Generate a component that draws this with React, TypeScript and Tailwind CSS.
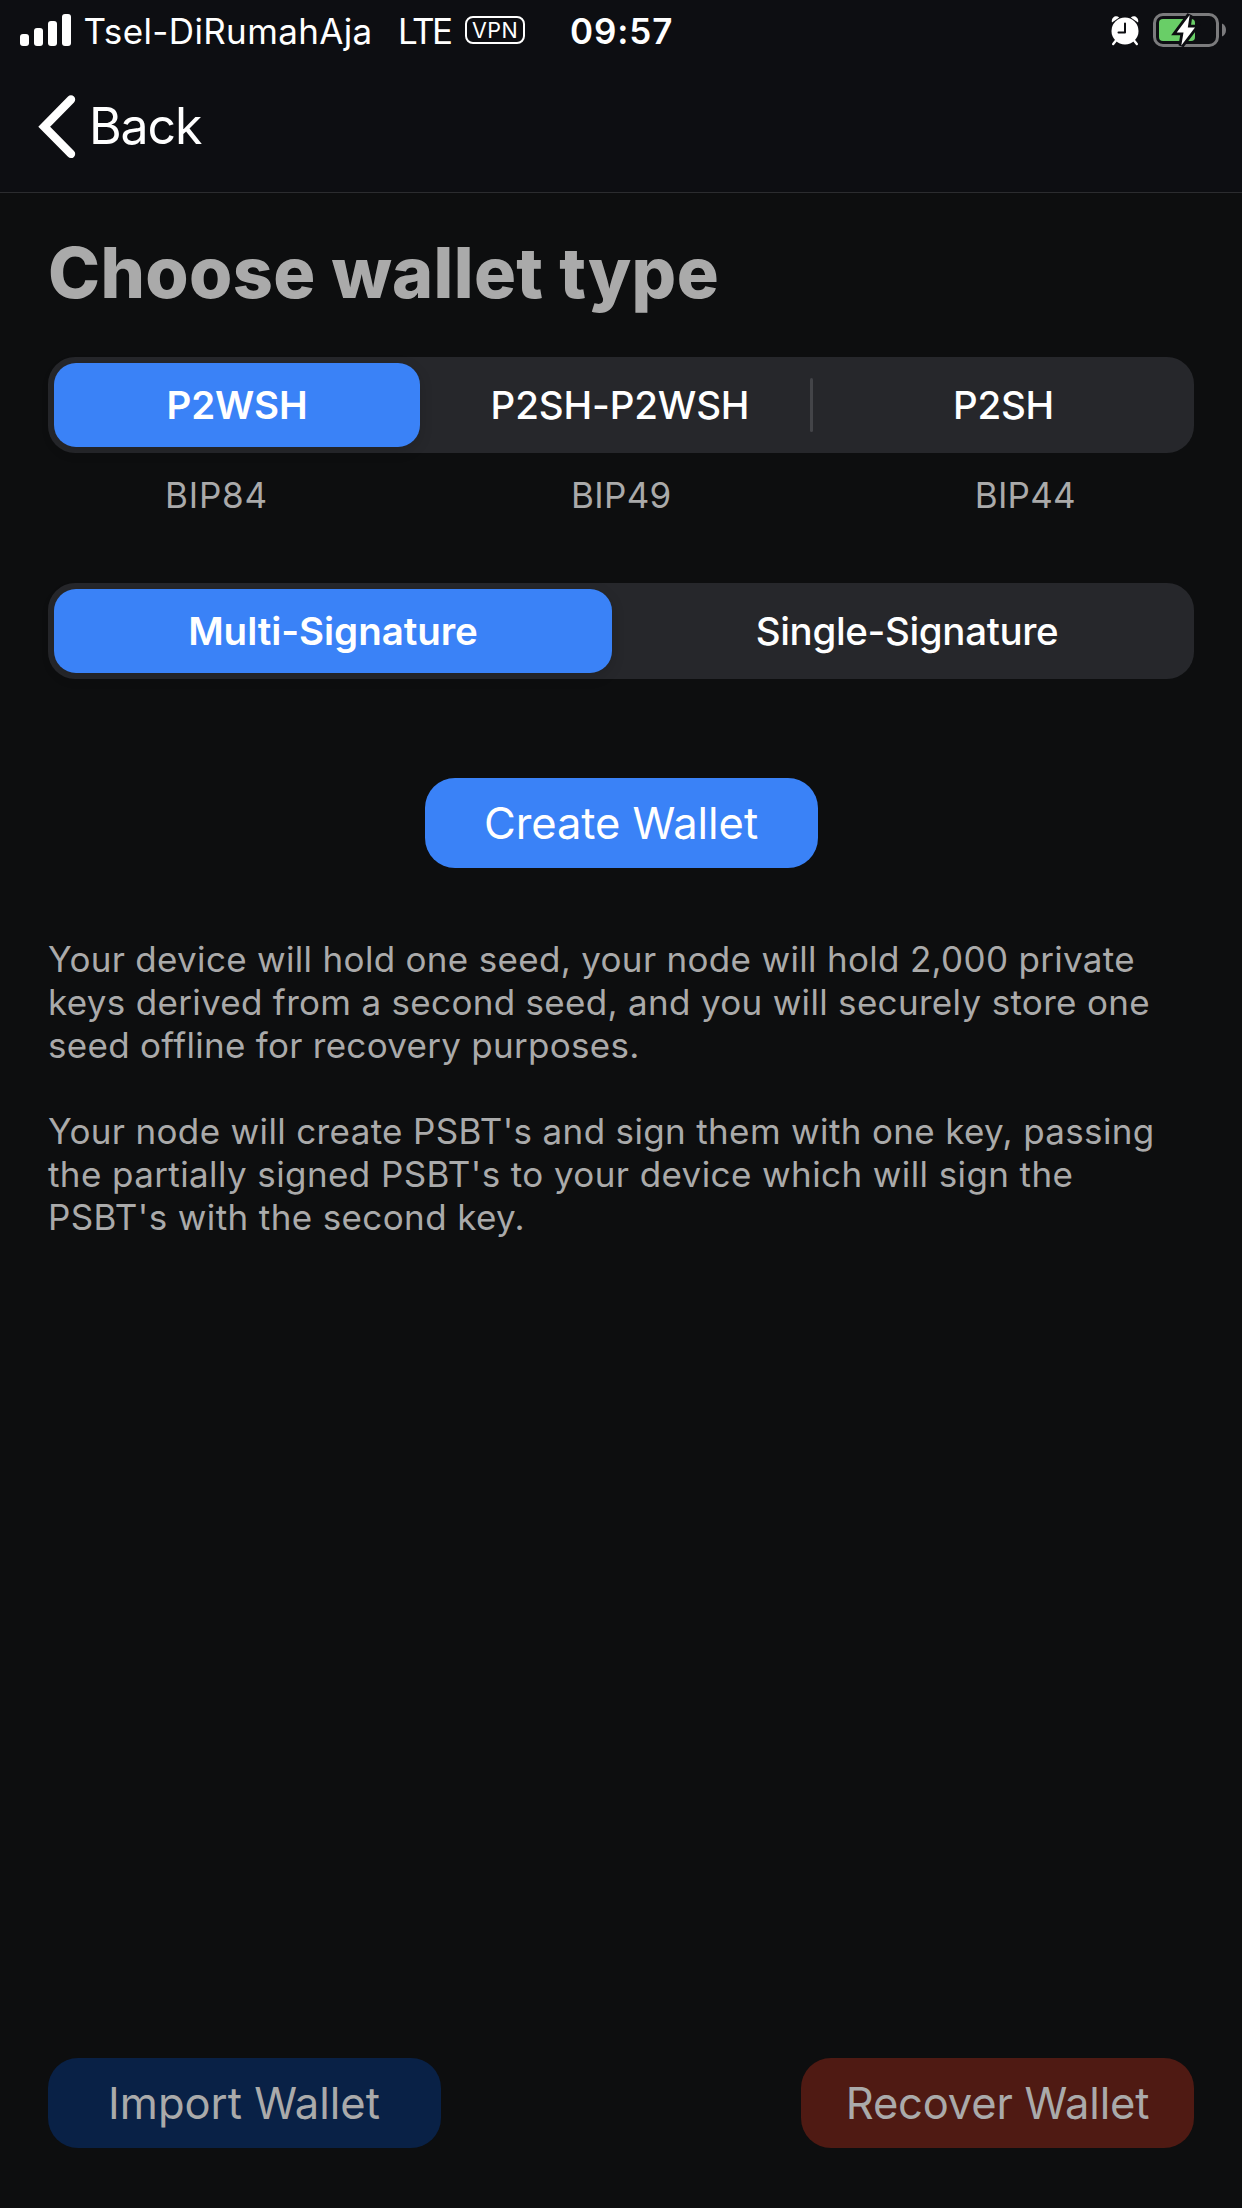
import type { ReactNode } from "react";

function SignalBars() {
  return (
    <div className="flex h-8 items-end gap-[5px]">
      <span className="h-3 w-[9px] rounded-[3px] bg-white" />
      <span className="h-[18px] w-[9px] rounded-[3px] bg-white" />
      <span className="h-[25px] w-[9px] rounded-[3px] bg-white" />
      <span className="h-8 w-[9px] rounded-[3px] bg-white" />
    </div>
  );
}

function AlarmIcon() {
  return (
    <svg className="h-[30px] w-[28px]" viewBox="0 0 28 30" fill="none">
      <path d="M5 24.5 2.2 28M23 24.5 25.8 28" stroke="#fff" strokeWidth="2.4" strokeLinecap="round" />
      <path d="M1 6.6C-0.4 2 4.6-1.8 8.2 1.4Z" fill="#fff" />
      <path d="M27 6.6C28.4 2 23.4-1.8 19.8 1.4Z" fill="#fff" />
      <circle cx="14" cy="15" r="13.5" fill="#fff" />
      <path d="M14 7.5V16.5H7.5" stroke="#0d0e12" strokeWidth="2" strokeLinecap="round" strokeLinejoin="round" />
    </svg>
  );
}

function BatteryIcon() {
  return (
    <svg className="h-[34px] w-[74px]" viewBox="0 0 74 34" fill="none">
      <rect x="1.5" y="1.5" width="63" height="31" rx="8.5" stroke="#7b7b7d" strokeWidth="3" />
      <path d="M69 10.5C71.5 11.5 73 14 73 17S71.5 22.5 69 23.5Z" fill="#7b7b7d" />
      <rect x="6" y="6" width="36" height="22" rx="4" fill="#69ce67" />
      <path
        d="M36.7 2 23.7 19.4H30.5L28.3 32.6 42 14.6H34.8Z"
        fill="#fff"
        stroke="#0d0e12"
        strokeWidth="5.6"
        strokeLinejoin="miter"
        paintOrder="stroke"
      />
    </svg>
  );
}

function StatusBar() {
  return (
    <div className="flex h-[62px] items-start pl-5 text-[35px] leading-[62px] text-white">
      <div className="pt-[14px]">
        <SignalBars />
      </div>
      <span className="ml-[12.5px] w-[314.5px] tracking-[0.36px]">Tsel-DiRumahAja</span>
      <span className="w-[67px] tracking-[-2.5px]">LTE</span>
      <span className="mt-4 flex h-7 w-[60px] items-center justify-center rounded-[8px] border-2 border-white text-[21.5px] leading-6 tracking-[0.4px]">
        VPN
      </span>
      <span className="ml-[45px] font-semibold tracking-[0.9px]">09:57</span>
      <div className="mr-[15px] ml-auto flex">
        <div className="mr-[14px] pt-[16px]">
          <AlarmIcon />
        </div>
        <div className="pt-[13px]">
          <BatteryIcon />
        </div>
      </div>
    </div>
  );
}

function NavBar() {
  return (
    <div className="flex h-[131px] border-b border-[#2b2c2f] pl-9 text-white">
      <svg className="mt-[31px] h-[68px] w-[42px]" viewBox="0 0 42 68" fill="none">
        <path d="M35 6.5 8.2 33.7 35 60.9" stroke="#fff" strokeWidth="8.4" strokeLinecap="round" strokeLinejoin="miter" />
      </svg>
      <span className="ml-[11px] text-[50px] leading-[128px] tracking-[-1.1px]">Back</span>
    </div>
  );
}

function Segmented({ children }: { children: ReactNode }) {
  return (
    <div className="flex h-24 items-center rounded-[27px] bg-[#26272b] p-1.5 pr-0 text-[38.5px] leading-[84px] font-medium text-white">
      {children}
    </div>
  );
}

const selectedPill =
  "h-[84px] rounded-[22px] bg-[#3a82f7] text-center font-semibold shadow-[0_4px_14px_rgba(0,0,0,0.14)]";

const actionButton =
  "h-[90px] w-[393px] rounded-[30px] text-center text-[43.5px] leading-[90px] whitespace-nowrap";

export default function App() {
  return (
    <div className="flex h-[2208px] w-[1242px] flex-col overflow-hidden bg-[#0d0e0f] font-['Inter',sans-serif]">
      <header className="bg-[#0d0e12]">
        <StatusBar />
        <NavBar />
      </header>
      <main className="flex grow flex-col px-12 pb-[60px] text-[#aaaaaa]">
        <h1 className="mt-[38px] text-[70px] leading-[84px] font-extrabold tracking-[0.39px]">Choose wallet type</h1>

        <div className="mt-[42px]">
          <Segmented>
            <button className={`${selectedPill} w-[366px] tracking-[-0.1px]`}>P2WSH</button>
            <button className="ml-[10px] w-[380px] tracking-[-0.15px]">P2SH-P2WSH</button>
            <span className="h-[54px] w-[3px] rounded-full bg-[#434448]" />
            <button className="w-[381px] tracking-[-0.2px]">P2SH</button>
          </Segmented>
        </div>

        <div className="mt-[21px] flex justify-between pr-[118px] pl-[117px] text-[35px] leading-[42px]">
          <span className="tracking-[0.8px]">BIP84</span>
          <span className="tracking-[0.35px]">BIP49</span>
          <span className="tracking-[0.28px]">BIP44</span>
        </div>

        <div className="mt-[67px]">
          <Segmented>
            <button className={`${selectedPill} w-[558px] tracking-[-0.06px]`}>Multi-Signature</button>
            <button className="ml-[9px] w-[572px] tracking-[-0.35px]">Single-Signature</button>
          </Segmented>
        </div>

        <button className={`${actionButton} mt-[99px] self-center bg-[#3a82f7] tracking-[-0.05px] text-white`}>
          Create Wallet
        </button>

        <div className="mt-[70px] flex flex-col gap-[43.2px] text-[35px] leading-[42.9px] whitespace-nowrap">
          <p>
            <span className="block tracking-[0.314px]">
              Your device will hold one seed, your node will hold 2,000 private
            </span>
            <span className="block tracking-[0.31px]">
              keys derived from a second seed, and you will securely store one
            </span>
            <span className="block tracking-[0.287px]">seed offline for recovery purposes.</span>
          </p>
          <p>
            <span className="block tracking-[0.348px]">
              Your node will create PSBT's and sign them with one key, passing
            </span>
            <span className="block tracking-[0.399px]">
              the partially signed PSBT's to your device which will sign the
            </span>
            <span className="block tracking-[0.38px]">PSBT's with the second key.</span>
          </p>
        </div>

        <div className="mt-auto flex justify-between">
          <button className={`${actionButton} bg-[#092146] pr-px`}>Import Wallet</button>
          <button className={`${actionButton} bg-[#4f1a13] tracking-[-0.19px]`}>Recover Wallet</button>
        </div>
      </main>
    </div>
  );
}
